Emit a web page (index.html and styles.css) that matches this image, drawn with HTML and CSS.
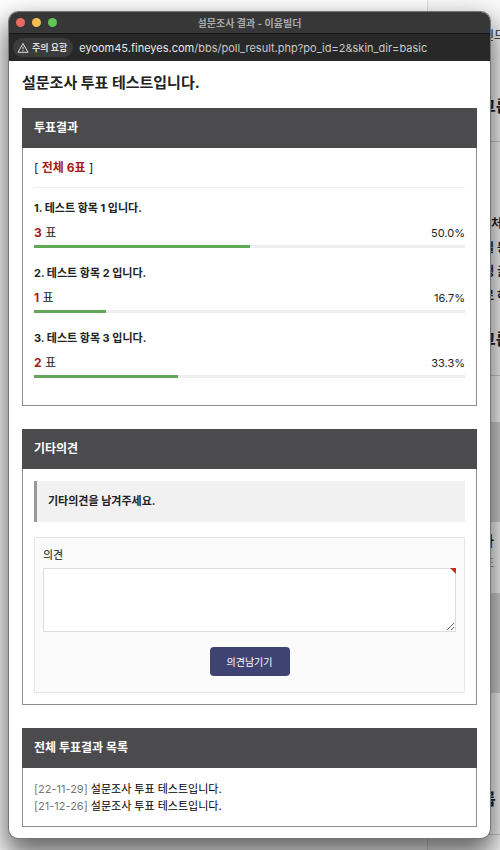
FILE: index.html
```
<!DOCTYPE html>
<html lang="ko">
<head>
    <meta charset="UTF-8">
    <meta name="viewport" content="width=device-width, initial-scale=1.0">
    <link rel="stylesheet" href="styles.css">
    <title>설문조사 결과 - 이윰빌더</title>
</head>
<body>
    <!-- page under the popup -->
    <div class="backdrop" aria-hidden="true">
        <div class="back-nav">인드</div>
        <div class="back-heading">그룹</div>
        <div class="back-list">
            <p class="back-first">처</p>
            <p>일 등</p>
            <p>행 글</p>
            <p>로 하</p>
        </div>
        <div class="back-heading back-heading-low">그룹</div>
        <div class="back-thumb"></div>
        <div class="back-caption">
            <strong>자</strong>
            <span>드</span>
        </div>
        <div class="back-thumb"></div>
        <div class="back-footer">룹</div>
    </div>

    <div class="window">
        <div class="titlebar">
            <div class="lights">
                <button type="button" class="light red" aria-label="닫기"></button>
                <button type="button" class="light yellow" aria-label="최소화"></button>
                <button type="button" class="light green" aria-label="확대"></button>
            </div>
            <span class="window-title">설문조사 결과 - 이윰빌더</span>
        </div>
        <div class="addressbar">
            <button type="button" class="warning">
                <svg width="12" height="12" viewBox="0 0 12 12" fill="none" stroke="currentColor" stroke-linejoin="round">
                    <path d="M6 1.5 L11 10.3 H1 Z"/>
                    <path d="M6 4.7 V7.3 M6 8.2 V9.2"/>
                </svg>
                주의 요함
            </button>
            <div class="url">eyoom45.fineyes.com<span>/bbs/poll_result.php?po_id=2&amp;skin_dir=basic</span></div>
        </div>

        <main class="content">
            <h1>설문조사 투표 테스트입니다.</h1>

            <section class="card">
                <h2>투표결과</h2>
                <div class="card-body">
                    <div class="total">[ <strong>전체 6표</strong> ]</div>
                    <div class="poll-item">
                        <h3>1. 테스트 항목 1 입니다.</h3>
                        <div class="count"><span class="votes"><b>3</b> 표</span><span>50.0%</span></div>
                        <div class="bar"><div class="bar-fill" style="width: 50%"></div></div>
                    </div>
                    <div class="poll-item">
                        <h3>2. 테스트 항목 2 입니다.</h3>
                        <div class="count"><span class="votes"><b>1</b> 표</span><span>16.7%</span></div>
                        <div class="bar"><div class="bar-fill" style="width: 16.7%"></div></div>
                    </div>
                    <div class="poll-item">
                        <h3>3. 테스트 항목 3 입니다.</h3>
                        <div class="count"><span class="votes"><b>2</b> 표</span><span>33.3%</span></div>
                        <div class="bar"><div class="bar-fill" style="width: 33.3%"></div></div>
                    </div>
                </div>
            </section>

            <section class="card">
                <h2>기타의견</h2>
                <div class="card-body">
                    <div class="note">기타의견을 남겨주세요.</div>
                    <form class="opinion-form" action="" method="POST">
                        <label for="opinion">의견</label>
                        <div class="field">
                            <textarea id="opinion" name="opinion" required></textarea>
                        </div>
                        <button type="submit" class="submit">의견남기기</button>
                    </form>
                </div>
            </section>

            <section class="card">
                <h2>전체 투표결과 목록</h2>
                <div class="card-body">
                    <ul class="poll-list">
                        <li><span>[22-11-29]</span> <a href="#">설문조사 투표 테스트입니다.</a></li>
                        <li><span>[21-12-26]</span> <a href="#">설문조사 투표 테스트입니다.</a></li>
                    </ul>
                </div>
            </section>
        </main>
    </div>
</body>
</html>
```
FILE: styles.css
```
*{
    box-sizing: border-box;
}

body{
    margin: 0;
    padding: 12px 10px 12px 9px;
    position: relative;
    overflow: hidden;
    background-color: #fff;
    font-family: "Inter", "Noto Sans CJK KR", sans-serif;
    font-size: 11px;
    line-height: 18px;
    color: #222;
}

h1, h2, h3, p, ul{
    margin: 0;
    padding: 0;
}

button, textarea{
    font-family: inherit;
}

/* page behind the window */
.backdrop{
    position: absolute;
    top: 0;
    right: 0;
    bottom: 0;
    width: 73px;
    overflow: hidden;
    border-left: 1px solid #ddd;
    background-color: #fafafa;
    white-space: nowrap;
}

.back-nav{
    height: 70px;
    padding: 27px 0 0 55px;
    font-size: 12px;
}

.back-heading{
    height: 72px;
    padding: 27px 0 0 53px;
    border-bottom: 1px solid #ccc;
    font-size: 16px;
    font-weight: 700;
}

.back-heading-low{
    height: 71px;
    padding-top: 25px;
}

.back-list{
    height: 163px;
    padding: 70px 0 0 55px;
    line-height: 24px;
    font-size: 12px;
    font-weight: 700;
}

.back-first{
    padding-left: 8px;
}

.back-thumb{
    height: 100px;
    margin-top: 46px;
    background-color: #d4d4d4;
}

.back-caption{
    height: 71px;
    padding: 8px 0 0 53px;
}

.back-caption strong, .back-caption span{
    display: block;
    line-height: 22px;
}

.back-caption strong{
    font-size: 14px;
}

.back-caption span{
    padding-left: 3px;
    color: #777;
}

.back-caption + .back-thumb{
    margin-top: 0;
}

.back-footer{
    height: 142px;
    padding: 97px 0 0 53px;
    border-bottom: 1px solid #ccc;
    font-size: 16px;
    font-weight: 700;
}

/* window */
.window{
    position: relative;
    overflow: hidden;
    border-radius: 9px;
    background-color: #fff;
    box-shadow: 0 0 0 1px #777, 0 14px 28px 4px rgba(0, 0, 0, 0.6);
}

.titlebar{
    display: grid;
    grid-template-columns: 1fr auto 1fr;
    align-items: center;
    height: 22px;
    padding: 0 7px;
    border-bottom: 1px solid #161616;
    background-color: #373737;
}

.lights{
    display: flex;
    gap: 7px;
}

.light{
    width: 9px;
    height: 9px;
    padding: 0;
    border: none;
    border-radius: 50%;
}

.red{
    background-color: #ed6a5e;
}

.yellow{
    background-color: #f5bf4f;
}

.green{
    background-color: #61c554;
}

.window-title{
    font-size: 10px;
    font-weight: 700;
    color: #aaa;
}

.addressbar{
    display: flex;
    align-items: center;
    gap: 6px;
    height: 27px;
    padding: 0 4px;
    background-color: #282828;
}

.warning{
    display: flex;
    align-items: center;
    gap: 3px;
    height: 19px;
    padding: 0 6px 0 4px;
    border: none;
    border-radius: 10px;
    background-color: #3c3c3c;
    color: #ddd;
    font-size: 9px;
    font-weight: 700;
}

.url{
    font-size: 11px;
    color: #e8e8e8;
    white-space: nowrap;
}

.url span{
    color: #c8c8c8;
}

.content{
    padding: 12px 13px 11px;
}

h1{
    margin-bottom: 15px;
    font-size: 15px;
    line-height: 20px;
}

.card{
    border: 1px solid #8c8c8c;
}

.card + .card{
    margin-top: 23px;
}

.card h2{
    margin: -1px -1px 0;
    padding: 11px 12px;
    background-color: #4b4b4d;
    color: #fff;
    font-size: 12px;
    line-height: 18px;
}

.card-body{
    padding: 12px 11px 11px;
}

.total{
    margin-bottom: 11px;
    padding-bottom: 12px;
    border-bottom: 1px solid #eee;
    font-size: 12px;
    line-height: 15px;
}

.total strong, .votes b{
    color: #a61b12;
}

.poll-item{
    margin-bottom: 16px;
}

.poll-item h3{
    margin-bottom: 7px;
    font-size: 11px;
}

.count{
    display: flex;
    justify-content: space-between;
    margin-bottom: 3px;
}

.votes{
    font-size: 12px;
}

.bar{
    height: 3px;
    background-color: #eceeef;
}

.bar-fill{
    height: 100%;
    background-color: #60a756;
}

.note{
    margin-bottom: 15px;
    padding: 12px 11px;
    border-left: 3px solid #999;
    background-color: #f1f1f1;
    font-weight: 700;
    line-height: 17px;
}

.opinion-form{
    padding: 8px 8px 16px;
    border: 1px solid #e6e6e6;
    background-color: #fbfbfb;
}

.opinion-form label{
    display: block;
    margin-bottom: 4px;
    color: #444;
    font-weight: 500;
}

.field{
    position: relative;
}

/* required mark */
.field::after{
    content: "";
    position: absolute;
    top: 0;
    right: 0;
    border-top: 6px solid #c9301c;
    border-left: 6px solid transparent;
}

textarea{
    display: block;
    width: 100%;
    height: 64px;
    padding: 6px;
    border: 1px solid #ddd;
    border-radius: 0;
    outline: none;
    background-color: #fff;
    font-size: 11px;
    resize: vertical;
}

.submit{
    display: block;
    height: 29px;
    margin: 15px auto 0;
    padding: 0 17px;
    border: none;
    border-radius: 4px;
    background-color: #3f4372;
    color: #fff;
    font-size: 10px;
    cursor: pointer;
}

.poll-list{
    padding-top: 1px;
    list-style: none;
    line-height: 17px;
}

.poll-list span{
    color: #777;
}

.poll-list a{
    color: #000;
    text-decoration: none;
}
```
